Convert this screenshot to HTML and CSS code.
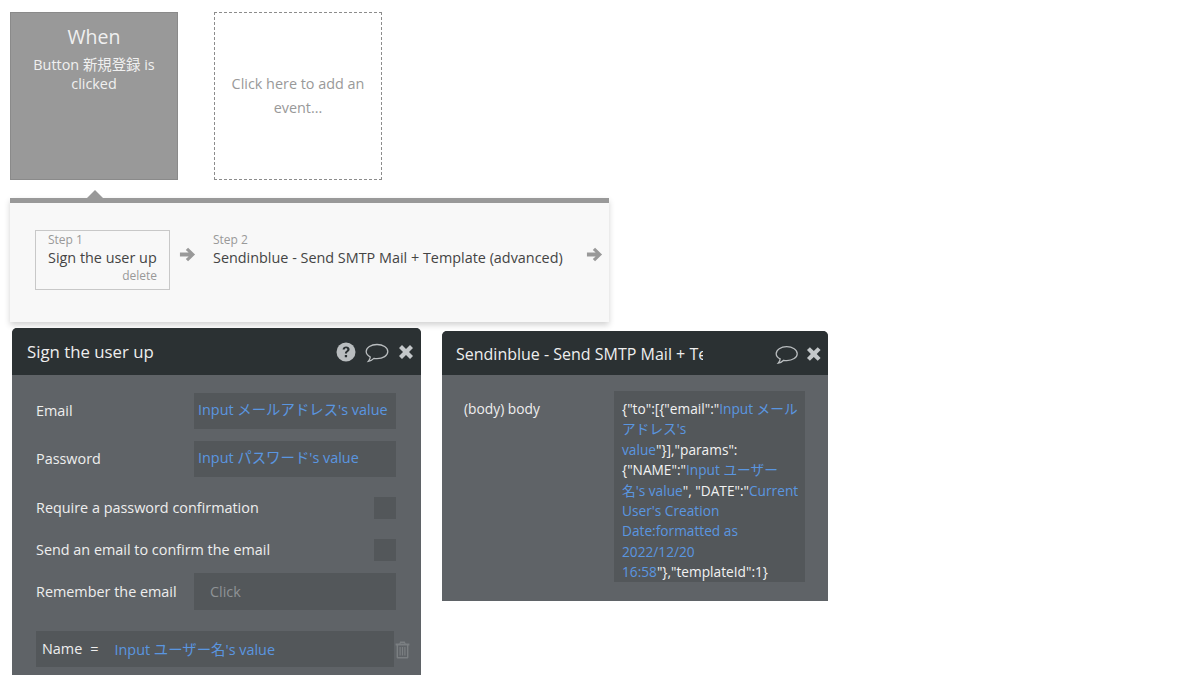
FILE: index.html
```html
<!DOCTYPE html>
<html lang="en">
<head>
  <meta charset="UTF-8">
  <title>Workflow editor</title>
  <link rel="stylesheet" href="styles.css">
</head>
<body>
  <!-- Event cards -->
  <div class="events">
    <div class="event-card">
      <div class="event-title">When</div>
      <div class="event-text">Button 新規登録 is clicked</div>
    </div>
    <div class="event-add">Click here to add an event...</div>
  </div>

  <!-- Steps strip -->
  <div class="steps">
    <div class="step step-active">
      <div class="step-label">Step 1</div>
      <div class="step-name">Sign the user up</div>
      <div class="step-delete">delete</div>
    </div>
    <svg class="arrow" viewBox="0 0 18 18"><path d="M9.6 1.8 L17 9 L9.6 16.2 L7.2 13.8 L10.2 11 L1 11 L1 7 L10.2 7 L7.2 4.2 Z"/></svg>
    <div class="step">
      <div class="step-label">Step 2</div>
      <div class="step-name">Sendinblue - Send SMTP Mail + Template (advanced)</div>
    </div>
    <svg class="arrow" viewBox="0 0 18 18"><path d="M9.6 1.8 L17 9 L9.6 16.2 L7.2 13.8 L10.2 11 L1 11 L1 7 L10.2 7 L7.2 4.2 Z"/></svg>
  </div>

  <div class="panels">
    <!-- Sign the user up -->
    <div class="panel panel-left">
      <div class="panel-head">
        <div class="panel-title">Sign the user up</div>
        <svg class="icon-help" viewBox="0 0 20 20"><circle cx="10" cy="10" r="9.5"/><path class="help-mark" d="M6.6 7.6 C6.7 5.4 8.2 4.4 10.1 4.4 C12.1 4.4 13.6 5.5 13.6 7.3 C13.6 9.7 11 9.6 11 11.6 L8.9 11.6 C8.9 8.8 11.3 8.8 11.3 7.4 C11.3 6.7 10.8 6.3 10 6.3 C9.2 6.3 8.8 6.8 8.7 7.6 Z M8.8 12.9 H11.1 V15.2 H8.8 Z"/></svg>
        <svg class="icon-chat" viewBox="0 0 24 20"><path d="M12 1.5 C18 1.5 22.8 4.6 22.8 8.6 C22.8 12.6 18 15.7 12 15.7 C10.9 15.7 9.9 15.6 8.9 15.4 C7.6 16.8 5.6 18 3.3 18.4 C4.4 17.1 5.2 15.7 5.3 14 C2.8 12.7 1.2 10.8 1.2 8.6 C1.2 4.6 6 1.5 12 1.5 Z"/></svg>
        <svg class="icon-close" viewBox="0 0 16 16"><path d="M1 4 L4 1 L8 5 L12 1 L15 4 L11 8 L15 12 L12 15 L8 11 L4 15 L1 12 L5 8 Z"/></svg>
      </div>
      <div class="panel-body">
        <div class="row row-email">
          <div class="row-label">Email</div>
          <div class="field dyn">Input メールアドレス's value</div>
        </div>
        <div class="row row-password">
          <div class="row-label">Password</div>
          <div class="field dyn">Input パスワード's value</div>
        </div>
        <div class="row row-check row-require">
          <div class="row-label">Require a password confirmation</div>
          <div class="checkbox"></div>
        </div>
        <div class="row row-check row-send">
          <div class="row-label">Send an email to confirm the email</div>
          <div class="checkbox"></div>
        </div>
        <div class="row row-remember">
          <div class="row-label">Remember the email</div>
          <div class="field field-click">Click</div>
        </div>
        <div class="param">
          <div class="param-box">
            <span class="param-key">Name</span>
            <span class="param-eq">=</span>
            <span class="dyn">Input ユーザー名's value</span>
          </div>
          <svg class="icon-trash" viewBox="0 0 15 18"><path d="M5.2 0.6 H9.8 L10.6 2.6 H14.4 V4.4 H13.4 V16.2 C13.4 17 12.8 17.5 12 17.5 H3 C2.2 17.5 1.6 17 1.6 16.2 V4.4 H0.6 V2.6 H4.4 Z M5.8 2 L5.5 2.6 H9.5 L9.2 2 Z M3 4.4 V16 H12 V4.4 Z M4.5 6 H5.7 V14.4 H4.5 Z M6.9 6 H8.1 V14.4 H6.9 Z M9.3 6 H10.5 V14.4 H9.3 Z"/></svg>
        </div>
      </div>
    </div>

    <!-- Sendinblue -->
    <div class="panel panel-right">
      <div class="panel-head">
        <div class="panel-title panel-title-clip">Sendinblue - Send SMTP Mail + Template (advanced)</div>
        <svg class="icon-chat" viewBox="0 0 24 20"><path d="M12 1.5 C18 1.5 22.8 4.6 22.8 8.6 C22.8 12.6 18 15.7 12 15.7 C10.9 15.7 9.9 15.6 8.9 15.4 C7.6 16.8 5.6 18 3.3 18.4 C4.4 17.1 5.2 15.7 5.3 14 C2.8 12.7 1.2 10.8 1.2 8.6 C1.2 4.6 6 1.5 12 1.5 Z"/></svg>
        <svg class="icon-close" viewBox="0 0 16 16"><path d="M1 4 L4 1 L8 5 L12 1 L15 4 L11 8 L15 12 L12 15 L8 11 L4 15 L1 12 L5 8 Z"/></svg>
      </div>
      <div class="panel-body body-right">
        <div class="row-label body-label">(body) body</div>
        <div class="code">{"to":[{"email":"<span class="dyn">Input メール<br>アドレス's<br>value</span>"}],"params":<br>{"NAME":"<span class="dyn">Input ユーザー<br>名's value</span>", "DATE":"<span class="dyn">Current<br>User's Creation<br>Date:formatted as<br>2022/12/20<br>16:58</span>"},"templateId":1}</div>
      </div>
    </div>
  </div>
</body>
</html>
```

FILE: styles.css
```css
* {
  margin: 0;
  padding: 0;
  box-sizing: border-box;
}
html, body {
  height: 675px;
  overflow: hidden;
}
body {
  background: #fff;
  font-family: 'Open Sans', 'Noto Sans CJK JP', sans-serif;
  font-size: 14.4px;
  color: #eee;
}
.dyn {
  color: #5a96e0;
}

/* events */
.events {
  display: flex;
  gap: 36px;
  padding: 12px 0 0 10px;
}
.event-card {
  position: relative;
  width: 168px;
  height: 168px;
  background: #999;
  border: 1px solid #8a8a8a;
  padding: 11px 12px 0;
  text-align: center;
  color: #f0f0f0;
}
.event-card::after {
  content: "";
  position: absolute;
  left: 76px;
  top: 177px;
  border-left: 8px solid transparent;
  border-right: 8px solid transparent;
  border-bottom: 8px solid #999;
}
.event-title {
  font-size: 19.5px;
  line-height: 26px;
  margin-bottom: 5px;
}
.event-text {
  line-height: 19px;
}
.event-add {
  width: 168px;
  height: 168px;
  border: 1px dashed #8c8c8c;
  padding: 59px 10px 0;
  text-align: center;
  line-height: 24px;
  color: #999;
}

/* steps */
.steps {
  display: flex;
  align-items: flex-start;
  width: 599px;
  height: 124px;
  margin: 18px 0 0 10px;
  padding: 27px 0 0 25px;
  background: #f8f8f8;
  border-top: 5px solid #999;
  box-shadow: 0 3px 6px rgba(0, 0, 0, 0.18);
}
.step {
  padding: 1px 0 0;
  color: #444;
}
.step-active {
  width: 135px;
  height: 60px;
  padding: 0 12px;
  border: 1px solid #c8c8c8;
}
.step-label {
  font-size: 12px;
  line-height: 15px;
  color: #999;
  margin-top: 1px;
}
.step-name {
  line-height: 22px;
  white-space: nowrap;
}
.step-delete {
  font-size: 12px;
  line-height: 13px;
  text-align: right;
  color: #999;
}
.arrow {
  width: 17px;
  height: 17px;
  margin: 16px 0 0 23px;
  fill: #999;
  flex: none;
}
.step-active + .arrow {
  margin: 16px 17px 0 9px;
}

/* panels */
.panels {
  display: flex;
  align-items: flex-start;
  gap: 21px;
  padding-left: 12px;
}
.panel {
  background: #5f6367;
  border-radius: 5px 5px 0 0;
  overflow: hidden;
}
.panel-left {
  width: 409px;
  height: 360px;
  margin-top: 6px;
}
.panel-right {
  width: 386px;
  height: 270px;
  margin-top: 9px;
}
.panel-head {
  display: flex;
  align-items: center;
  height: 47px;
  padding: 0 7px 0 15px;
  background: #2b3133;
}
.panel-right .panel-head {
  height: 44px;
  padding: 2px 6px 0 14px;
}
.panel-title {
  flex: 1;
  font-size: 16.8px;
  color: #eee;
  white-space: nowrap;
  overflow: hidden;
}
.panel-title-clip {
  flex: none;
  width: 247px;
  margin-right: 72px;
  font-size: 16px;
}
.icon-help {
  width: 20px;
  height: 20px;
  margin-right: 9px;
  fill: #b9bdbf;
}
.help-mark {
  fill: #2b3133;
}
.icon-chat {
  width: 24px;
  height: 20px;
  margin-right: 9px;
  margin-top: 2px;
  fill: none;
  stroke: #b9bdbf;
  stroke-width: 1.3;
}
.panel-right .icon-chat {
  margin-right: 8px;
}
.icon-close {
  width: 16px;
  height: 16px;
  fill: #c4c8ca;
}

/* rows */
.panel-body {
  padding: 18px 25px 0 24px;
}
.row {
  display: flex;
  align-items: center;
  justify-content: space-between;
}
.row-label {
  color: #eee;
  padding-bottom: 2px;
}
.field {
  width: 202px;
  height: 36px;
  padding: 0 4px;
  line-height: 34px;
  background: #53575a;
  white-space: nowrap;
}
.row-password {
  margin-top: 12px;
}
.checkbox {
  width: 22px;
  height: 22px;
  background: #53575a;
}
.row-require {
  margin-top: 20px;
}
.row-send {
  margin-top: 20px;
}
.row-remember {
  margin-top: 12px;
}
.row-remember .row-label {
  padding-bottom: 0;
}
.field-click {
  height: 37px;
  line-height: 37px;
  padding-left: 16px;
  color: #8f9396;
}
.param {
  display: flex;
  align-items: center;
  margin: 21px -16px 0 0;
}
.param-box {
  display: flex;
  align-items: center;
  width: 358px;
  height: 36px;
  padding: 0 0 2px 6px;
  background: #53575a;
  flex: none;
}
.param-eq {
  margin: 0 16px 0 8px;
}
.icon-trash {
  width: 15px;
  height: 18px;
  margin: 1px 0 0 1px;
  fill: #7b7f82;
  flex: none;
}

/* body field */
.body-right {
  display: flex;
  padding: 16px 0 0 22px;
  font-size: 13.8px;
}
.body-label {
  width: 150px;
  line-height: 36px;
}
.code {
  width: 191px;
  height: 191px;
  padding: 8px 0 0 8px;
  background: #53575a;
  font-size: 13.7px;
  line-height: 20.4px;
  white-space: nowrap;
  color: #f2f2f2;
}
```
